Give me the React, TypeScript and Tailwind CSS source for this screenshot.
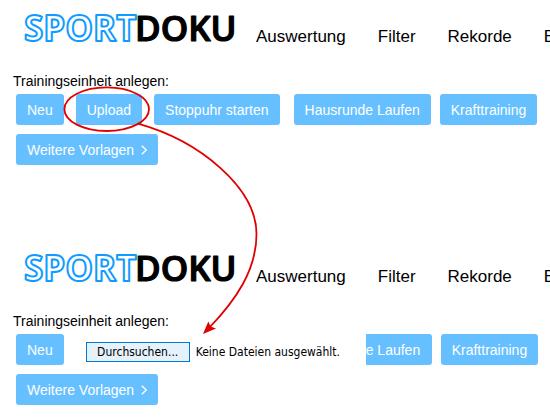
import { ReactNode, useId, useRef } from "react";
import { clsx } from "clsx";

const navItems = ["Auswertung", "Filter", "Rekorde", "E"];

interface TemplateButtonProps {
  children: ReactNode;
  className?: string;
}

const TemplateButton = ({ children, className }: TemplateButtonProps) => (
  <button
    type="button"
    className={clsx(
      "flex h-[31px] shrink-0 items-center whitespace-nowrap bg-[#66c0ff] px-[11px] text-sm text-white",
      className ?? "rounded-[3px]"
    )}
  >
    {children}
  </button>
);

const Logo = () => (
  <a href="#" className="shrink-0">
    <svg
      viewBox="0 0 209 57"
      className="h-[57px] w-[209px] overflow-visible font-['Open_Sans',sans-serif]"
      strokeLinejoin="round"
    >
      <text x="0" y="41" fontSize="35" fontWeight="700" fill="#fff" stroke="#109cff" strokeWidth="2">
        SPORT
      </text>
      <text x="111" y="41" fontSize="35" fontWeight="600" fill="#000" stroke="#000" strokeWidth="1.2">
        DOKU
      </text>
    </svg>
  </a>
);

const Header = () => (
  <header className="flex h-[71px] items-start pl-6">
    <Logo />
    <nav className="flex gap-8 pl-[23px] pt-[25px] text-[17px] leading-6">
      {navItems.map((item) => (
        <a key={item} href="#">
          {item}
        </a>
      ))}
    </nav>
  </header>
);

const FilePicker = () => {
  const input = useRef<HTMLInputElement>(null);
  const id = useId();

  return (
    <div className="flex w-[290px] shrink-0 items-center gap-[6px] pl-[10px] pt-1 font-['DejaVu_Sans_Condensed','DejaVu_Sans',sans-serif] text-xs">
      <input ref={input} id={id} type="file" className="hidden" />
      <button
        type="button"
        onClick={() => input.current?.click()}
        className="h-5 w-[104px] shrink-0 border border-[#0078d7] bg-[#e5f1fb] leading-4"
      >
        Durchsuchen...
      </button>
      <label htmlFor={id} className="whitespace-nowrap">
        Keine Dateien ausgewählt.
      </label>
    </div>
  );
};

const TrainingSection = ({ picking = false }: { picking?: boolean }) => (
  <section>
    <Header />
    <h2 className="pl-[13px] text-sm leading-5">Trainingseinheit anlegen:</h2>
    <div className="flex flex-wrap gap-y-[9px] pl-4 pt-[3px]">
      <div className="flex gap-3">
        <TemplateButton>Neu</TemplateButton>
        {picking ? (
          <FilePicker />
        ) : (
          <>
            <TemplateButton>Upload</TemplateButton>
            <TemplateButton>Stoppuhr starten</TemplateButton>
          </>
        )}
      </div>
      {picking ? (
        <div className="flex gap-[9px]">
          {/* what the picker leaves of "Hausrunde Laufen" */}
          <TemplateButton className="w-[66px] rounded-r-[3px] pl-0">e Laufen</TemplateButton>
          <TemplateButton>Krafttraining</TemplateButton>
        </div>
      ) : (
        <div className="flex gap-[9px] pl-[14px]">
          <TemplateButton>Hausrunde Laufen</TemplateButton>
          <TemplateButton>Krafttraining</TemplateButton>
        </div>
      )}
      <div className="w-full">
        <TemplateButton>
          Weitere Vorlagen
          <svg viewBox="0 0 6 10" className="ml-[7px] h-[10px] w-[6px]" fill="none" stroke="currentColor" strokeWidth="1.3">
            <path d="M.8.8 5.2 5 .8 9.2" />
          </svg>
        </TemplateButton>
      </div>
    </div>
  </section>
);

// Marks the upload button and points at the file picker it opens
const Annotation = () => (
  <svg
    viewBox="0 0 550 420"
    className="pointer-events-none absolute left-0 top-0 h-[420px] w-[550px]"
    fill="none"
    stroke="#e00000"
    strokeWidth="1.8"
  >
    <ellipse cx="106.7" cy="109.2" rx="42.3" ry="21.8" />
    <path d="M138 123.7C200 141 256.5 188 256.5 234C256.5 270 236 300 209 328" />
    <path d="M203 334 208.3 321.5 210.7 326.5 216 328.4Z" fill="#e00000" stroke="none" />
  </svg>
);

export default function App() {
  return (
    <main className="relative flex flex-col gap-[75px] overflow-hidden bg-white pb-[15px] font-['Liberation_Sans',Arial,sans-serif] text-black">
      <TrainingSection />
      <TrainingSection picking />
      <Annotation />
    </main>
  );
}
